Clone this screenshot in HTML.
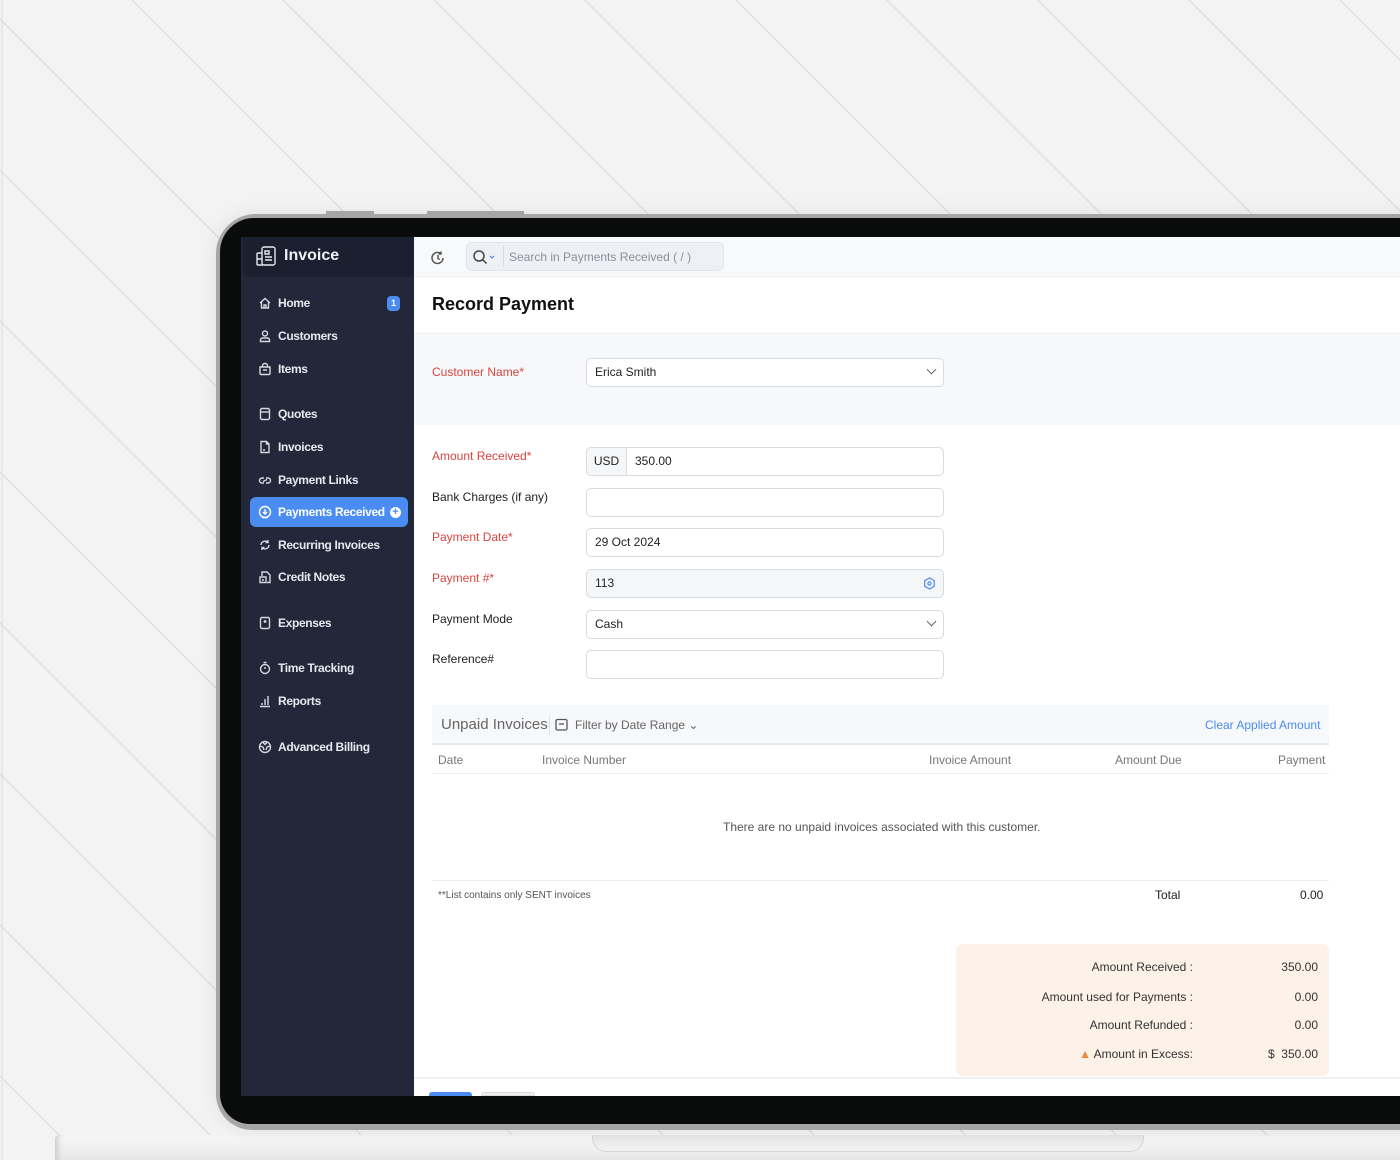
<!DOCTYPE html>
<html><head><meta charset="utf-8">
<style>
*{box-sizing:border-box;margin:0;padding:0}
body{width:1400px;height:1160px;overflow:hidden;background:#f3f3f3;font-family:"Liberation Sans",sans-serif;position:relative}
.a{position:absolute}
.nav{position:absolute;left:258px;color:#e6e8ee;font-size:12px;font-weight:bold;display:flex;align-items:center;gap:6px;letter-spacing:-0.35px}
.nav svg{width:14px;height:14px;fill:none;stroke:#d5d8e0;stroke-width:1.4}
.lbl{position:absolute;left:432px;font-size:12px;color:#222}
.red{color:#d8453f}
.inp{position:absolute;left:586px;width:358px;height:29px;border:1px solid #d8dbe2;border-radius:5px;background:#fff;font-size:12px;color:#222;padding-left:8px;line-height:27px}
.chev{position:absolute;right:8px;top:10px;width:7px;height:7px;border-right:1.5px solid #666;border-bottom:1.5px solid #666;transform:rotate(45deg);top:7px}
.th{position:absolute;top:753px;font-size:12px;color:#777}
.sm{position:absolute;font-size:12px;color:#333;text-align:right}
</style></head><body>
<svg class="a" style="left:0;top:0" width="1400" height="1160">
<defs><pattern id="p" patternUnits="userSpaceOnUse" width="151" height="151" x="0" y="0">
<line x1="-20" y1="-152" x2="171" y2="39" stroke="#dcdcdc" stroke-width="1.2"/>
<line x1="-20" y1="-1" x2="171" y2="190" stroke="#dcdcdc" stroke-width="1.2"/>
</pattern></defs>
<rect width="1400" height="1160" fill="url(#p)"/>
<line x1="2" y1="0" x2="2" y2="1160" stroke="#ddd"/>
</svg>
<!-- base -->
<div class="a" style="left:55px;top:1135px;width:1345px;height:25px;background:linear-gradient(#f8f8f8,#e8e8e8);border-radius:4px 0 0 0;box-shadow:inset 6px 0 6px -3px #ccc"></div>
<div class="a" style="left:592px;top:1135px;width:552px;height:17px;background:linear-gradient(#e6e6e6,#f3f3f3);border-radius:0 0 14px 14px;border:1px solid #d6d6d6;border-top:none"></div>
<!-- laptop lid -->
<div class="a" style="left:326px;top:211px;width:48px;height:3px;background:#aaa"></div>
<div class="a" style="left:427px;top:211px;width:97px;height:3px;background:#aaa"></div>
<div class="a" style="left:216px;top:214px;width:1200px;height:916px;background:#a6a6a6;border-radius:40px 0 0 36px;box-shadow:0 0 20px rgba(0,0,0,.08)"></div>
<div class="a" style="left:220px;top:218px;width:1200px;height:906px;background:#0a0c0c;border-radius:34px 0 0 30px"></div>
<!-- screen -->
<div class="a" style="left:241px;top:237px;width:1159px;height:859px;background:#fff;overflow:hidden">
</div>
<!-- sidebar -->
<div class="a" style="left:241px;top:237px;width:173px;height:859px;background:#222839"></div>
<div class="a" style="left:243px;top:237px;width:171px;height:40px;background:#1b2030;border-radius:0 0 6px 6px"></div>
<svg class="a" style="left:255px;top:245px" width="22" height="22" fill="none" stroke="#e6e8ee" stroke-width="1.4"><rect x="7" y="2" width="13" height="18" rx="2"/><path d="M7 8H3a1 1 0 0 0-1 1v10a1 1 0 0 0 1 1h5M2 14h5M10 6h4v3h-4zM10 12h7M10 15h7"/></svg>
<div class="a" style="left:284px;top:247px;font-size:16px;font-weight:bold;color:#eef0f5">Invoice</div>

<div class="a" style="left:250px;top:497px;width:158px;height:30px;background:#4a8cf2;border-radius:6px"></div>
<div class="a" style="left:387px;top:296px;width:13px;height:15px;background:#4a8cf2;border-radius:4px;color:#fff;font-size:9px;font-weight:bold;text-align:center;line-height:15px">1</div>

<div class="nav" style="top:296px"><svg viewBox="0 0 14 14"><path d="M2 7L7 2.5 12 7M3.5 6v6h7V6M6 12V9h2v3"/></svg>Home</div>
<div class="nav" style="top:329px"><svg viewBox="0 0 14 14"><circle cx="7" cy="4.5" r="2.5"/><path d="M2.5 12.5v-1.5a2 2 0 0 1 2-2h5a2 2 0 0 1 2 2v1.5z"/></svg>Customers</div>
<div class="nav" style="top:362px"><svg viewBox="0 0 14 14"><path d="M4.5 4.5V3.5a2.5 2 0 0 1 5 0v1M2 5h10v6.5a1 1 0 0 1-1 1H3a1 1 0 0 1-1-1zM5 8h4"/></svg>Items</div>
<div class="nav" style="top:407px"><svg viewBox="0 0 14 14"><rect x="2.5" y="1.5" width="9" height="11" rx="1.5"/><path d="M2.5 5h9"/></svg>Quotes</div>
<div class="nav" style="top:440px"><svg viewBox="0 0 14 14"><path d="M3 1.5h5.5L11 4v8.5H3zM8.5 1.5V4H11M5 10h2"/></svg>Invoices</div>
<div class="nav" style="top:473px"><svg viewBox="0 0 14 14"><path d="M6 5H4a2.5 2.5 0 0 0 0 5h2M8 5h2a2.5 2.5 0 0 1 0 5H8M5 8.5l4-2"/></svg>Payment Links</div>
<div class="nav" style="top:505px;color:#fff"><svg viewBox="0 0 14 14" style="stroke:#fff"><circle cx="7" cy="7" r="5.5"/><path d="M7 4v5M5 7l2 2 2-2M4 12.5h6"/></svg>Payments Received <span style="display:inline-block;width:11px;height:11px;border-radius:50%;background:#fff;color:#4a8cf2;font-size:11px;line-height:10px;text-align:center;margin-left:-1px">+</span></div>
<div class="nav" style="top:538px"><svg viewBox="0 0 14 14"><path d="M3 7a4 4 0 0 1 7-2.5M11 7a4 4 0 0 1-7 2.5M10 2v2.5H7.5M4 12V9.5h2.5"/></svg>Recurring Invoices</div>
<div class="nav" style="top:570px"><svg viewBox="0 0 14 14"><path d="M4 6V2h5l3 3v7.5H9M2 7h6v5.5H2zM4 10h2"/></svg>Credit Notes</div>
<div class="nav" style="top:616px"><svg viewBox="0 0 14 14"><rect x="2.5" y="1.5" width="9" height="11" rx="1.5"/><path d="M7 4v3M5.5 5.5h3"/></svg>Expenses</div>
<div class="nav" style="top:661px"><svg viewBox="0 0 14 14"><circle cx="7" cy="8" r="4.5"/><path d="M5.5 1.5h3M7 8V6"/></svg>Time Tracking</div>
<div class="nav" style="top:694px"><svg viewBox="0 0 14 14"><path d="M2 12.5h10M4 11V9M7 11V5M10 11V2"/></svg>Reports</div>
<div class="nav" style="top:740px"><svg viewBox="0 0 14 14"><circle cx="7" cy="7" r="5.5"/><path d="M2 6l3 1 1 3M12 6l-3 1-1 3M5 2.5l2 2 2-2"/></svg>Advanced Billing</div>

<!-- top bar -->
<div class="a" style="left:414px;top:237px;width:986px;height:40px;background:#f8f9fb;border-bottom:1px solid #eceef2"></div>
<svg class="a" style="left:430px;top:250px" width="16" height="16" fill="none" stroke="#555" stroke-width="1.5"><path d="M13 8a5.5 5.5 0 1 1-2-4.3M11 1.5v2.5H8.5M8 5v3.5l2 1"/></svg>
<div class="a" style="left:466px;top:242px;width:258px;height:29px;background:#eef0f5;border:1px solid #e2e5ec;border-radius:6px"></div>
<svg class="a" style="left:472px;top:249px" width="28" height="16" fill="none" stroke="#444" stroke-width="1.5"><circle cx="7" cy="7" r="5"/><path d="M11 11l3.5 3.5"/><path d="M18 7l2 2 2-2" stroke="#4a8cf2" stroke-width="1.2"/></svg>
<div class="a" style="left:503px;top:246px;width:1px;height:21px;background:#d8dbe2"></div>
<div class="a" style="left:509px;top:250px;font-size:12px;color:#8a8f9c">Search in Payments Received ( / )</div>

<!-- title -->
<div class="a" style="left:432px;top:294px;font-size:18px;font-weight:bold;color:#111">Record Payment</div>
<div class="a" style="left:414px;top:333px;width:986px;height:92px;background:#f7f8fa;border-top:1px solid #eceef2"></div>

<div class="lbl red" style="top:365px">Customer Name*</div>
<div class="inp" style="top:358px">Erica Smith<span class="chev"></span></div>

<div class="lbl red" style="top:449px">Amount Received*</div>
<div class="inp" style="top:447px;padding-left:0"><span style="display:inline-block;width:40px;height:27px;background:#f5f6f8;border-right:1px solid #d8dbe2;text-align:center;border-radius:5px 0 0 5px">USD</span><span style="padding-left:8px">350.00</span></div>
<div class="lbl" style="top:490px">Bank Charges (if any)</div>
<div class="inp" style="top:488px"></div>
<div class="lbl red" style="top:530px">Payment Date*</div>
<div class="inp" style="top:528px">29 Oct 2024</div>
<div class="lbl red" style="top:571px">Payment #*</div>
<div class="inp" style="top:569px;background:#f5f6f8">113<svg class="a" style="right:7px;top:7px" width="13" height="13" fill="none" stroke="#4a8cf2" stroke-width="1.2"><path d="M6.5 1l4.8 2.75v5.5L6.5 12 1.7 9.25v-5.5z"/><circle cx="6.5" cy="6.5" r="1.6"/></svg></div>
<div class="lbl" style="top:612px">Payment Mode</div>
<div class="inp" style="top:610px">Cash<span class="chev"></span></div>
<div class="lbl" style="top:652px">Reference#</div>
<div class="inp" style="top:650px"></div>

<!-- unpaid invoices -->
<div class="a" style="left:432px;top:705px;width:897px;height:40px;background:#f7f8fa;border-bottom:2px solid #e6e8ec"></div>
<div class="a" style="left:441px;top:716px;font-size:15px;color:#666">Unpaid Invoices</div>
<div class="a" style="left:549px;top:715px;width:1px;height:20px;background:#e0e2e6"></div>
<svg class="a" style="left:555px;top:718px" width="13" height="13" fill="none" stroke="#555" stroke-width="1.3"><rect x="1" y="1.5" width="11" height="10.5" rx="1.5"/><path d="M4 6h5"/></svg>
<div class="a" style="left:575px;top:718px;font-size:12px;color:#666">Filter by Date Range ⌄</div>
<div class="a" style="left:1205px;top:718px;font-size:12px;color:#4a8cf2">Clear Applied Amount</div>
<div class="th" style="left:438px">Date</div>
<div class="th" style="left:542px">Invoice Number</div>
<div class="th" style="left:929px">Invoice Amount</div>
<div class="th" style="left:1115px">Amount Due</div>
<div class="th" style="left:1278px">Payment</div>
<div class="a" style="left:432px;top:773px;width:897px;height:1px;background:#eceef1"></div>
<div class="a" style="left:723px;top:820px;font-size:12px;color:#555">There are no unpaid invoices associated with this customer.</div>
<div class="a" style="left:432px;top:880px;width:897px;height:1px;background:#eceef1"></div>
<div class="a" style="left:438px;top:890px;font-size:10px;color:#555">**List contains only SENT invoices</div>
<div class="a" style="left:1155px;top:888px;font-size:12px;color:#222">Total</div>
<div class="a" style="left:1300px;top:888px;font-size:12px;color:#222">0.00</div>

<div class="a" style="left:956px;top:944px;width:373px;height:132px;background:#fcf2e8;border-radius:7px"></div>
<div class="sm" style="right:207px;top:960px">Amount Received :</div>
<div class="sm" style="right:82px;top:960px">350.00</div>
<div class="sm" style="right:207px;top:990px">Amount used for Payments :</div>
<div class="sm" style="right:82px;top:990px">0.00</div>
<div class="sm" style="right:207px;top:1018px">Amount Refunded :</div>
<div class="sm" style="right:82px;top:1018px">0.00</div>
<div class="sm" style="right:207px;top:1047px"><span style="color:#f0883a">▲</span> Amount in Excess:</div>
<div class="sm" style="right:82px;top:1047px">$&nbsp; 350.00</div>

<div class="a" style="left:414px;top:1077px;width:986px;height:19px;background:#fff;border-top:2px solid #eef0f2"></div>
<div class="a" style="left:429px;top:1092px;width:43px;height:4px;background:#4a8cf2;border-radius:3px 3px 0 0"></div>
<div class="a" style="left:481px;top:1092px;width:54px;height:4px;background:#eee;border:1px solid #ddd;border-radius:3px 3px 0 0"></div>
</body></html>
